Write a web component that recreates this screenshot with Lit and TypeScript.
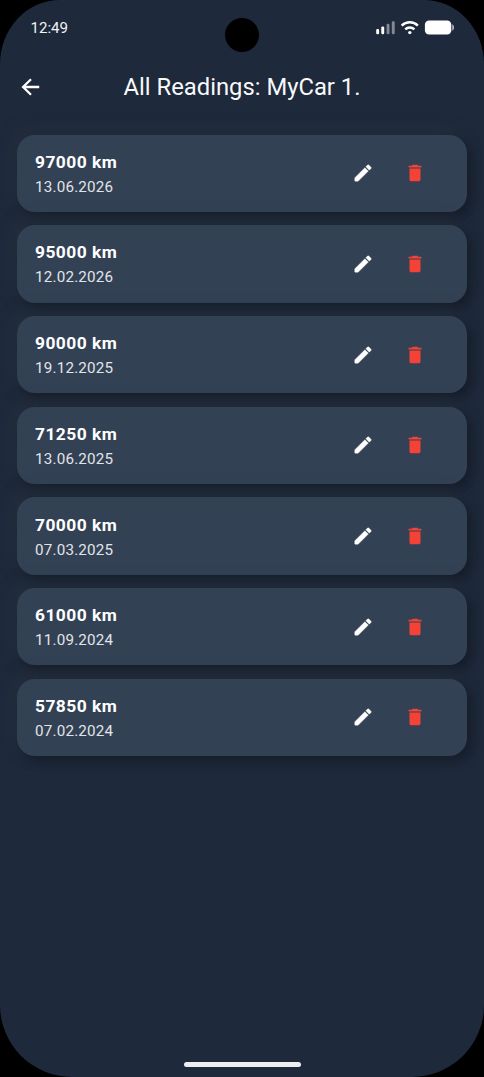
import { LitElement, html, css } from "lit";
import { customElement, property } from "lit/decorators.js";

interface Reading {
  km: number;
  date: string;
}

const READINGS: Reading[] = [
  { km: 97000, date: "13.06.2026" },
  { km: 95000, date: "12.02.2026" },
  { km: 90000, date: "19.12.2025" },
  { km: 71250, date: "13.06.2025" },
  { km: 70000, date: "07.03.2025" },
  { km: 61000, date: "11.09.2024" },
  { km: 57850, date: "07.02.2024" },
];

@customElement("status-bar")
export class StatusBar extends LitElement {
  static styles = css`
    :host {
      display: flex;
      justify-content: space-between;
      align-items: center;
      height: 55px;
      box-sizing: border-box;
      padding: 0 30px 0 30.5px;
      color: #f1f3f5;
      font-size: 15.1px;
    }
    .icons {
      display: block;
    }
  `;

  render() {
    return html`
      <span>12:49</span>
      <svg class="icons" width="78" height="16" viewBox="0 0 78 16" fill="#fff">
        <rect x="0.2" y="8.9" width="2.9" height="5.4" rx="1.2" />
        <rect x="5.3" y="6.4" width="2.9" height="7.9" rx="1.2" />
        <rect x="10.6" y="3.7" width="2.9" height="10.6" rx="1.2" opacity="0.45" />
        <rect x="15.8" y="1.2" width="2.9" height="13.1" rx="1.2" opacity="0.45" />
        <g fill="none" stroke="#fff" stroke-width="2.4">
          <path d="M25.7 5.6A11.6 11.6 0 0 1 41.9 5.6" />
          <path d="M29.2 9.4A6.6 6.6 0 0 1 38.4 9.4" />
        </g>
        <circle cx="33.8" cy="12.6" r="1.7" />
        <rect x="48.9" y="0.4" width="26.4" height="14.2" rx="4.2" />
        <path d="M76.3 4.3c1.1.5 1.6 1.6 1.6 3.2s-.5 2.7-1.6 3.2z" opacity="0.75" />
      </svg>
    `;
  }
}

@customElement("reading-card")
export class ReadingCard extends LitElement {
  @property({ attribute: false }) reading!: Reading;

  static styles = css`
    :host {
      display: flex;
      align-items: center;
      box-sizing: border-box;
      height: 77.4px;
      padding: 0 40.5px 0 17.6px;
      border-radius: 18px;
      background: #334155;
      box-shadow:
        4.5px 4.5px 11px rgba(0, 0, 0, 0.3),
        -4.5px -4.5px 17px rgba(51, 58, 64, 0.4);
    }
    .text {
      flex: 1;
      display: flex;
      flex-direction: column;
      padding-top: 2.2px;
    }
    .km {
      font-size: 17.4px;
      font-weight: 700;
      line-height: 25px;
      letter-spacing: 0.45px;
      color: #fff;
    }
    .date {
      font-size: 15.2px;
      line-height: 24px;
      letter-spacing: 0.2px;
      color: #e1e4e8;
    }
    .actions {
      display: flex;
      gap: 30px;
    }
    .icon {
      display: block;
      width: 22px;
      height: 22px;
      fill: #fff;
    }
    .edit {
      stroke: #fff;
      stroke-width: 0.4;
    }
    .delete {
      fill: #f44336;
    }
  `;

  render() {
    return html`
      <div class="text">
        <span class="km">${this.reading.km} km</span>
        <span class="date">${this.reading.date}</span>
      </div>
      <div class="actions">
        <svg class="icon edit" viewBox="0 0 24 24">
          <path
            d="M3 17.46v3.04c0 .28.22.5.5.5h3.04c.13 0 .26-.05.35-.15L17.81 9.94l-3.75-3.75L3.15 17.1c-.1.1-.15.22-.15.36zM20.71 7.04a1 1 0 0 0 0-1.41l-2.34-2.34a1 1 0 0 0-1.41 0l-1.83 1.83 3.75 3.75 1.83-1.83z"
          />
        </svg>
        <svg class="icon delete" viewBox="0 0 24 24">
          <path
            d="M6 19c0 1.1.9 2 2 2h8c1.1 0 2-.9 2-2V7H6v12zM19 4h-3.5l-1-1h-5l-1 1H5v2h14V4z"
          />
        </svg>
      </div>
    `;
  }
}

@customElement("app-root")
export class AppRoot extends LitElement {
  static styles = css`
    :host {
      display: block;
      height: 1077px;
      background: #000;
      font-family: Roboto, sans-serif;
    }
    .screen {
      position: relative;
      display: flex;
      flex-direction: column;
      height: 100%;
      overflow: hidden;
      border-radius: 60px 60px 72px 72px / 64px 64px 72px 72px;
      background: #1e293b;
    }
    .camera {
      position: absolute;
      top: 18px;
      left: 225px;
      width: 34px;
      height: 34px;
      border-radius: 50%;
      background: #000;
    }
    .header {
      display: grid;
      grid-template-columns: 60px 1fr 60px;
      align-items: center;
      height: 64px;
    }
    .back {
      display: block;
      margin-left: 17.5px;
      width: 26px;
      height: 26px;
      fill: none;
      stroke: #fff;
      stroke-width: 2.1;
    }
    .title {
      margin: 0;
      text-align: center;
      font-size: 23.8px;
      font-weight: 400;
      color: #f8f9fa;
      white-space: nowrap;
    }
    .list {
      flex: 1;
      display: flex;
      flex-direction: column;
      gap: 13.3px;
      padding: 15.5px 17.4px 0;
    }
    .home {
      align-self: center;
      width: 117px;
      height: 5px;
      margin-bottom: 10.5px;
      border-radius: 3px;
      background: #eceeef;
    }
  `;

  render() {
    return html`
      <div class="screen">
        <div class="camera"></div>
        <status-bar></status-bar>
        <header class="header">
          <svg class="back" viewBox="0 0 24 24">
            <path d="M19.6 12H5M12 4.9 4.7 12l7.3 7.1" />
          </svg>
          <h1 class="title">All Readings: MyCar 1.</h1>
        </header>
        <main class="list">
          ${READINGS.map((r) => html`<reading-card .reading=${r}></reading-card>`)}
        </main>
        <div class="home"></div>
      </div>
    `;
  }
}
